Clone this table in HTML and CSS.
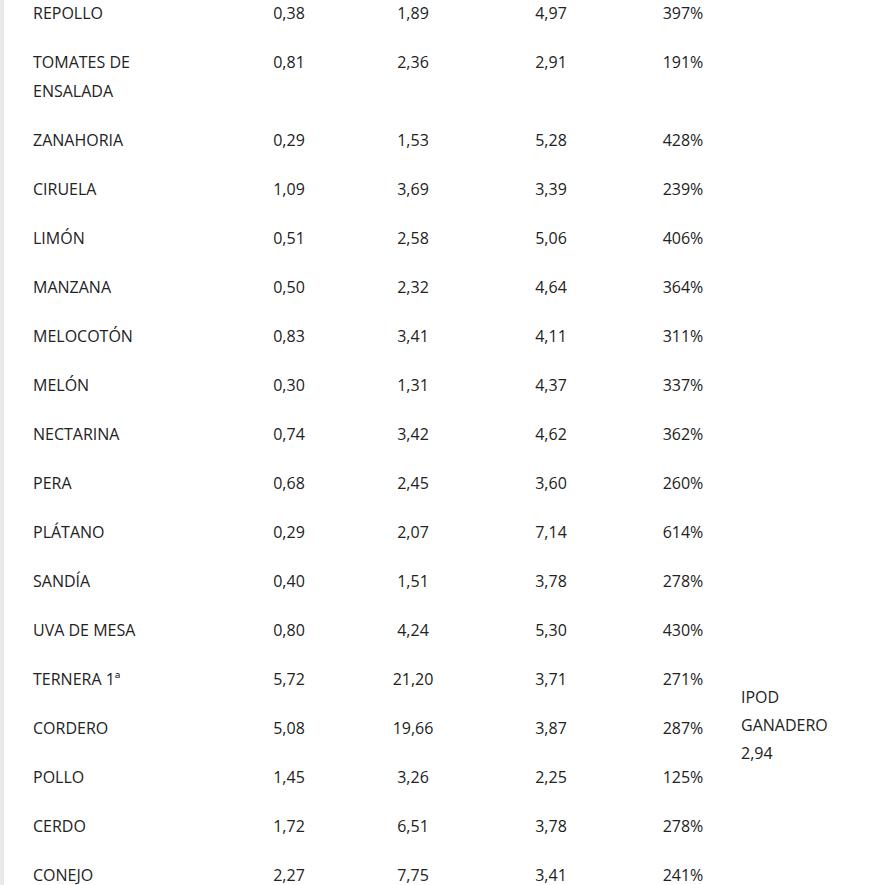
FILE: index.html
```html
<!DOCTYPE html>
<html lang="es">
<head>
<meta charset="utf-8">
<link rel="stylesheet" href="styles.css">
</head>
<body>
<div class="page">
  <table class="prices">
    <colgroup>
      <col class="c-name">
      <col class="c-a">
      <col class="c-b">
      <col class="c-c">
      <col class="c-d">
      <col class="c-e">
    </colgroup>
    <tbody>
      <tr><td>REPOLLO</td><td class="num">0,38</td><td class="num">1,89</td><td class="num">4,97</td><td class="num">397%</td><td></td></tr>
      <tr><td>TOMATES DE ENSALADA</td><td class="num">0,81</td><td class="num">2,36</td><td class="num">2,91</td><td class="num">191%</td><td></td></tr>
      <tr><td>ZANAHORIA</td><td class="num">0,29</td><td class="num">1,53</td><td class="num">5,28</td><td class="num">428%</td><td></td></tr>
      <tr><td>CIRUELA</td><td class="num">1,09</td><td class="num">3,69</td><td class="num">3,39</td><td class="num">239%</td><td></td></tr>
      <tr><td>LIMÓN</td><td class="num">0,51</td><td class="num">2,58</td><td class="num">5,06</td><td class="num">406%</td><td></td></tr>
      <tr><td>MANZANA</td><td class="num">0,50</td><td class="num">2,32</td><td class="num">4,64</td><td class="num">364%</td><td></td></tr>
      <tr><td>MELOCOTÓN</td><td class="num">0,83</td><td class="num">3,41</td><td class="num">4,11</td><td class="num">311%</td><td></td></tr>
      <tr><td>MELÓN</td><td class="num">0,30</td><td class="num">1,31</td><td class="num">4,37</td><td class="num">337%</td><td></td></tr>
      <tr><td>NECTARINA</td><td class="num">0,74</td><td class="num">3,42</td><td class="num">4,62</td><td class="num">362%</td><td></td></tr>
      <tr><td>PERA</td><td class="num">0,68</td><td class="num">2,45</td><td class="num">3,60</td><td class="num">260%</td><td></td></tr>
      <tr><td>PLÁTANO</td><td class="num">0,29</td><td class="num">2,07</td><td class="num">7,14</td><td class="num">614%</td><td></td></tr>
      <tr><td>SANDÍA</td><td class="num">0,40</td><td class="num">1,51</td><td class="num">3,78</td><td class="num">278%</td><td></td></tr>
      <tr><td>UVA DE MESA</td><td class="num">0,80</td><td class="num">4,24</td><td class="num">5,30</td><td class="num">430%</td><td></td></tr>
      <tr><td>TERNERA 1ª</td><td class="num">5,72</td><td class="num">21,20</td><td class="num">3,71</td><td class="num">271%</td><td class="ipod" rowspan="3">IPOD GANADERO 2,94</td></tr>
      <tr><td>CORDERO</td><td class="num">5,08</td><td class="num">19,66</td><td class="num">3,87</td><td class="num">287%</td></tr>
      <tr><td>POLLO</td><td class="num">1,45</td><td class="num">3,26</td><td class="num">2,25</td><td class="num">125%</td></tr>
      <tr><td>CERDO</td><td class="num">1,72</td><td class="num">6,51</td><td class="num">3,78</td><td class="num">278%</td><td></td></tr>
      <tr><td>CONEJO</td><td class="num">2,27</td><td class="num">7,75</td><td class="num">3,41</td><td class="num">241%</td><td></td></tr>
    </tbody>
  </table>
</div>
</body>
</html>
```

FILE: styles.css
```css
html, body {
  margin: 0;
  padding: 0;
  background: #ffffff;
}
body {
  font-family: "Open Sans", "Liberation Sans", sans-serif;
  font-size: 16px;
  color: #222222;
  overflow: hidden;
}
.page {
  border-left: 4px solid #e8e9e8;
  min-height: 885px;
  padding-left: 19px;
  box-sizing: border-box;
}
.prices {
  border-collapse: collapse;
  margin-top: -11px;
  width: 828px;
  table-layout: fixed;
}
.c-name { width: 196px; }
.c-a { width: 140px; }
.c-b { width: 108px; }
.c-c { width: 168px; }
.c-d { width: 96px; }
.c-e { width: 120px; }
.prices td {
  padding: 10px;
  line-height: 29px;
  vertical-align: top;
  text-align: left;
}
.prices td.num {
  text-align: center;
}
.prices td.ipod {
  vertical-align: middle;
  line-height: 28px;
  padding-bottom: 18px;
}
```
